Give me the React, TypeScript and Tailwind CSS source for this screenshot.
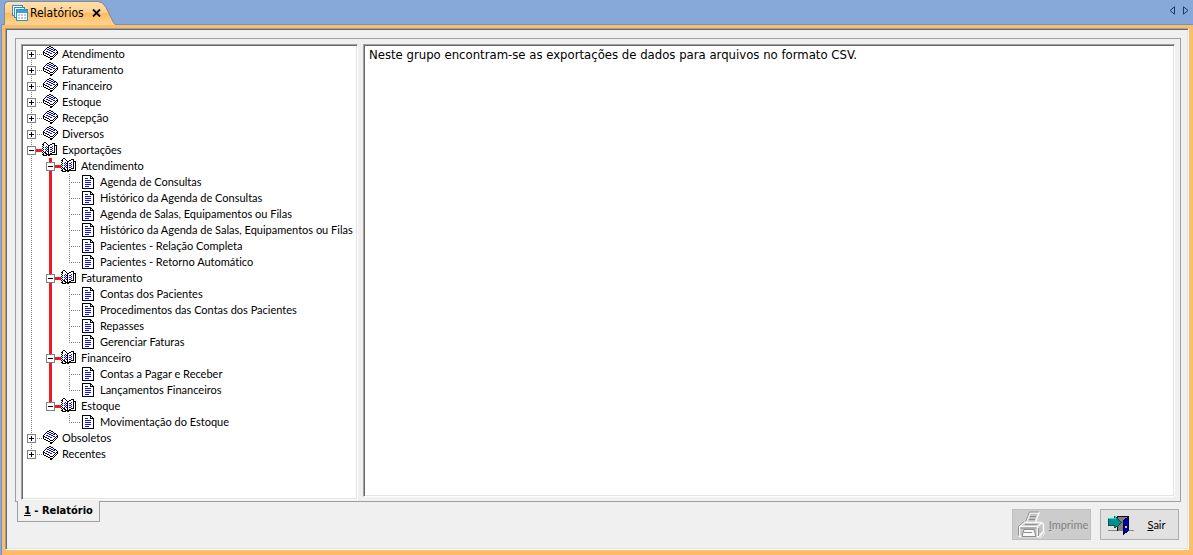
import { useState } from 'react';
import type { ReactNode } from 'react';

interface ReportNode {
  name: string;
  children?: ReportNode[];
}

const reports: ReportNode[] = [
  { name: 'Atendimento', children: [] },
  { name: 'Faturamento', children: [] },
  { name: 'Financeiro', children: [] },
  { name: 'Estoque', children: [] },
  { name: 'Recepção', children: [] },
  { name: 'Diversos', children: [] },
  {
    name: 'Exportações',
    children: [
      {
        name: 'Atendimento',
        children: [
          { name: 'Agenda de Consultas' },
          { name: 'Histórico da Agenda de Consultas' },
          { name: 'Agenda de Salas, Equipamentos ou Filas' },
          { name: 'Histórico da Agenda de Salas, Equipamentos ou Filas' },
          { name: 'Pacientes - Relação Completa' },
          { name: 'Pacientes - Retorno Automático' },
        ],
      },
      {
        name: 'Faturamento',
        children: [
          { name: 'Contas dos Pacientes' },
          { name: 'Procedimentos das Contas dos Pacientes' },
          { name: 'Repasses' },
          { name: 'Gerenciar Faturas' },
        ],
      },
      {
        name: 'Financeiro',
        children: [{ name: 'Contas a Pagar e Receber' }, { name: 'Lançamentos Financeiros' }],
      },
      { name: 'Estoque', children: [{ name: 'Movimentação do Estoque' }] },
    ],
  },
  { name: 'Obsoletos', children: [] },
  { name: 'Recentes', children: [] },
];

const closedBook = [
  '.......KK.......',
  '.....KKWWKK.....',
  '....KWWBBWWK....',
  '...KWBBWWBBWKK..',
  '..KWWWWBBWWBBWK.',
  '.KWWBBWWWBBWWWWK',
  '.KKWWWBBWWWBBWKK',
  '.KWKKWWWBBWWWKWK',
  '.KWWWKKWWWWWKWK.',
  '..KKWWWKWWWKWK..',
  '...WKKWWKKKWK...',
  '.....WKKWWWK....',
  '.......WKKK.....',
  '........KK......',
];

const openBook = [
  '..KK............',
  '.KWWK.....KKK...',
  'KKWWWK..KKWWK...',
  '.KWWWWKKWWWWKKK.',
  'KWWWBWKWWWBWKWK.',
  '.KWBWBKWBBWWKWK.',
  'KWWWBWKWWWBWKWK.',
  '.KWBWBKWBBWWKWK.',
  'KWWWBWKWWWBWKWK.',
  '.KWBWBKWBBWWKWK.',
  'KWKKWWKWWWKKKWK.',
  '.K.KKWKWKKWWWWK.',
  'KK..KKKKKKKKKKK.',
  '.KKKK.KK........',
];

const inks: Record<string, string> = { K: '#000000', W: '#ffffff', B: '#1010e8' };

function PixelIcon({ rows }: { rows: string[] }) {
  return (
    <svg width="16" height="16" viewBox="0 0 16 16" shapeRendering="crispEdges" aria-hidden="true">
      {rows.flatMap((row, y) =>
        row.split('').map((c, x) =>
          c === '.' ? null : <rect key={`${x}-${y}`} x={x} y={y} width="1" height="1" fill={inks[c]} />
        )
      )}
    </svg>
  );
}

function PageIcon() {
  return (
    <svg width="16" height="16" viewBox="0 0 16 16" shapeRendering="crispEdges" aria-hidden="true">
      <path d="M2.5 1.5h8l3 3v10h-11z" fill="#fff" stroke="#000" />
      <path d="M10.5 1.5v3h3" fill="none" stroke="#000" />
      <path d="M5 4.5h3M5 6.5h6M5 8.5h6M5 10.5h6M5 12.5h4" stroke="#1010e8" />
    </svg>
  );
}

type Line = 'none' | 'dotted' | 'red';

// One 19x16 slot of the tree: the vertical guide that runs through it
function Guide({ line }: { line: Line }) {
  return (
    <svg width="19" height="16" viewBox="0 0 19 16" shapeRendering="crispEdges" className="shrink-0" aria-hidden="true">
      {line === 'red' && <path d="M8.5 0v16" stroke="#ed1c24" strokeWidth="3" />}
      {line === 'dotted' && <path d="M8.5 0v16" stroke="#808080" strokeDasharray="1 1" />}
    </svg>
  );
}

interface JointProps {
  red: boolean;
  first: boolean;
  last: boolean;
  branch: Line;
  box?: 'plus' | 'minus';
}

function Joint({ red, first, last, branch, box }: JointProps) {
  const top = first ? 8 : 0;
  const bottom = last ? 9 : 16;
  return (
    <svg width="19" height="16" viewBox="0 0 19 16" shapeRendering="crispEdges" className="block" aria-hidden="true">
      {red ? (
        <path d={`M8.5 0V${bottom}`} stroke="#ed1c24" strokeWidth="3" />
      ) : (
        <path d={`M8.5 ${top}V${bottom}`} stroke="#808080" strokeDasharray="1 1" />
      )}
      {branch === 'red' ? (
        <path d="M9 8.5h10" stroke="#ed1c24" strokeWidth="3" />
      ) : (
        <path d="M10 8.5h9" stroke="#808080" strokeDasharray="1 1" />
      )}
      {box && (
        <>
          <rect x="4.5" y="4.5" width="8" height="8" fill="#fff" stroke="#808080" />
          <path d={box === 'plus' ? 'M6 8.5h5M8.5 6v5' : 'M6 8.5h5'} stroke="#000" />
        </>
      )}
    </svg>
  );
}

interface TreeProps {
  nodes: ReportNode[];
  guides: Line[];
  path: string;
  open: string[];
  onToggle: (path: string) => void;
}

function Tree({ nodes, guides, path, open, onToggle }: TreeProps) {
  const depth = guides.length;
  return (
    <ul>
      {nodes.map((node, i) => {
        const id = `${path}/${node.name}`;
        const isOpen = open.includes(id);
        const last = i === nodes.length - 1;
        const red = depth === 1;
        const joint = (
          <Joint
            red={red}
            first={depth === 0 && i === 0}
            last={last}
            branch={isOpen ? 'red' : 'dotted'}
            box={node.children ? (isOpen ? 'minus' : 'plus') : undefined}
          />
        );
        return (
          <li key={id}>
            <div className="flex h-4 items-center leading-4 whitespace-nowrap">
              {guides.map((line, g) => (
                <Guide key={g} line={line} />
              ))}
              {node.children ? (
                <button
                  aria-label={node.name}
                  aria-expanded={isOpen}
                  onClick={() => onToggle(id)}
                  className="shrink-0"
                >
                  {joint}
                </button>
              ) : (
                <span className="shrink-0">{joint}</span>
              )}
              <span className="w-5 shrink-0">
                {node.children ? <PixelIcon rows={isOpen ? openBook : closedBook} /> : <PageIcon />}
              </span>
              <span>{node.name}</span>
            </div>
            {isOpen && node.children && (
              <Tree
                nodes={node.children}
                guides={[...guides, last ? 'none' : red ? 'red' : 'dotted']}
                path={id}
                open={open}
                onToggle={onToggle}
              />
            )}
          </li>
        );
      })}
    </ul>
  );
}

function TablesIcon() {
  return (
    <svg width="16" height="16" viewBox="0 0 16 16" aria-hidden="true">
      <g fill="#fff" stroke="#2b8fc9" shapeRendering="crispEdges">
        <rect x="0.5" y="0.5" width="10" height="10" />
        <rect x="2.5" y="2.5" width="10" height="10" />
        <rect x="4.5" y="4.5" width="11" height="11" />
      </g>
      <path d="M5 5h10v3H5z" fill="#3f9fd4" />
      <path d="M6 9h2v2H6zM9 9h2v2H9zM12 9h2v2h-2zM6 12h2v2H6zM9 12h2v2H9zM12 12h2v2h-2z" fill="#bccbd6" />
    </svg>
  );
}

function PrinterIcon() {
  return (
    <svg width="28" height="28" viewBox="0 0 28 28" aria-hidden="true">
      <path d="M8 12l4-10h9l-4 10z" fill="#c4c4c4" stroke="#f8f8f8" strokeWidth="1.500" />
      <path d="M7.500 11l4-10h9" fill="none" stroke="#909090" />
      <path d="M12 5.500h6M11 8.500h6" stroke="#8c8c8c" />
      <path d="M1.500 15.500l5-4h17l2 2v7l-5 5h-19z" fill="#c4c4c4" stroke="#f8f8f8" strokeWidth="1.500" />
      <path d="M1.500 15.500h18l5-4M19.500 15.500v9" fill="none" stroke="#f8f8f8" strokeWidth="1.500" />
      <path d="M.5 24.500v-9l5.500-5M2.500 17h16M7 13.500h12M20.500 17v8" fill="none" stroke="#909090" />
      <path d="M6 18.500h10l2 7H4z" fill="#f8f8f8" stroke="#8c8c8c" />
      <path d="M6 21.500h8" stroke="#8c8c8c" />
      <path d="M20 26.500l7-7M22 27l5-5" stroke="#f8f8f8" strokeWidth="1.500" strokeDasharray="1 1" />
    </svg>
  );
}

function DoorIcon() {
  return (
    <svg width="32" height="26" viewBox="-2 0 32 26" shapeRendering="crispEdges" aria-hidden="true">
      <path d="M1 18.500h28" stroke="#808080" />
      <path d="M12 3h12v16H12z" fill="#808080" />
      <path d="M11.500 19V3.500H24" fill="none" stroke="#000" />
      <path d="M17.500 8.500l6-5v15l-6 5z" fill="#0000a0" stroke="#000050" />
      <path d="M19 14h2v2h-2z" fill="#d8d820" />
      <path d="M1.500 6.500h7v-3l7 7-7 6v-3h-7z" fill="#008c8c" stroke="#004848" />
      <path d="M1 6.500h8v-3" fill="none" stroke="#00e8e8" />
    </svg>
  );
}

interface ActionButtonProps {
  icon: ReactNode;
  label: string;
  disabled?: boolean;
  onClick?: () => void;
}

function ActionButton({ icon, label, disabled, onClick }: ActionButtonProps) {
  return (
    <button
      disabled={disabled}
      onClick={onClick}
      className="flex h-[31px] w-[79px] items-center border border-[#adadad] bg-[#e1e1e1] pl-1 font-['Lato',sans-serif] disabled:border-[#bfbfbf] disabled:bg-[#cccccc] disabled:text-[#838383]"
    >
      <span className="flex w-[30px] shrink-0 justify-center">{icon}</span>
      <span className="flex-1 pt-0.5 text-center">
        <u>{label[0]}</u>
        {label.slice(1)}
      </span>
    </button>
  );
}

export default function App() {
  const [open, setOpen] = useState<string[]>([
    '/Exportações',
    '/Exportações/Atendimento',
    '/Exportações/Faturamento',
    '/Exportações/Financeiro',
    '/Exportações/Estoque',
  ]);

  const toggle = (id: string) => {
    setOpen((prev) => (prev.includes(id) ? prev.filter((p) => p !== id) : [...prev, id]));
  };

  return (
    <div className="flex h-screen flex-col bg-[#86a9d9] font-['DejaVu_Sans_Condensed','DejaVu_Sans',sans-serif] text-[11px] text-black">
      {/* Tab bar */}
      <header className="flex h-6 shrink-0 items-end justify-between">
        <div className="relative ml-1 flex h-6 w-28 items-center">
          <svg className="absolute inset-0" width="112" height="25" viewBox="0 0 112 25" aria-hidden="true">
            <defs>
              <linearGradient id="tab" x1="0" y1="0" x2="0" y2="1">
                <stop offset="0" stopColor="#ffe0ae" />
                <stop offset="0.45" stopColor="#ffd08c" />
                <stop offset="0.5" stopColor="#ffbc60" />
                <stop offset="1" stopColor="#ffd592" />
              </linearGradient>
            </defs>
            <path d="M1 25V5q0-3 3-3H94q5 0 8 6l7 14q1 3 3 3z" fill="url(#tab)" />
            <path d="M.5 25V5q0-3.500 3.500-3.500H94q5 0 8 6l7 14q1 3 3 3" fill="none" stroke="#8a8a86" />
          </svg>
          <button className="relative flex items-center gap-0.5 pl-2 pt-0.5 text-xs">
            <TablesIcon />
            Relatórios
          </button>
          <button aria-label="Fechar" className="relative ml-2 pt-0.5">
            <svg width="9" height="8" viewBox="0 0 9 8" aria-hidden="true">
              <path d="M1 .5l7 7M8 .5l-7 7" stroke="#000" strokeWidth="1.800" />
            </svg>
          </button>
        </div>
        <div className="flex gap-2 self-start pt-1.5 pr-1">
          <button aria-label="Anterior">
            <svg width="6" height="9" viewBox="0 0 6 9" aria-hidden="true">
              <path d="M5.500 .8v7.400L1 4.500z" fill="none" stroke="#1c3a68" />
            </svg>
          </button>
          <button aria-label="Próximo">
            <svg width="6" height="9" viewBox="0 0 6 9" aria-hidden="true">
              <path d="M.5 .8v7.400L5 4.500z" fill="none" stroke="#1c3a68" />
            </svg>
          </button>
        </div>
      </header>

      {/* Orange frame */}
      <div className="ml-px flex min-h-0 flex-1 flex-col border-t border-l border-[#6f93c8] bg-[#ffbc68] pt-[3px] pr-[4px] pb-[5px] pl-[3px]">
        <main className="flex min-h-0 flex-1 flex-col border border-t-[#a0a0a0] border-r-white border-b-white border-l-[#a0a0a0] bg-[#f0f0f0] pt-[9px] pr-[7px] pb-[9px] pl-[9px] shadow-[inset_1px_1px_0_#696969,inset_-1px_-1px_0_#e3e3e3]">
          <div className="flex min-h-0 flex-1 gap-[5px] border border-[#a0a0a0] p-[5px] pb-[1px]">
            <nav
              aria-label="Relatórios"
              className="w-[337px] shrink-0 overflow-hidden border border-t-[#a0a0a0] border-r-white border-b-white border-l-[#a0a0a0] bg-white p-px font-['Lato',sans-serif] shadow-[inset_1px_1px_0_#696969,inset_-1px_-1px_0_#e3e3e3] [font-variant-ligatures:none]"
            >
              <Tree nodes={reports} guides={[]} path="" open={open} onToggle={toggle} />
            </nav>
            <section className="mb-[3px] min-w-0 flex-1 border border-t-[#a0a0a0] border-r-white border-b-white border-l-[#a0a0a0] bg-white px-[5px] py-px text-[13px] leading-[18px] shadow-[inset_1px_1px_0_#696969,inset_-1px_-1px_0_#e3e3e3]">
              Neste grupo encontram-se as exportações de dados para arquivos no formato CSV.
            </section>
          </div>
          <footer className="flex shrink-0 items-start justify-between pr-0.5">
            <button className="-mt-px ml-0.5 h-[21px] border border-t-0 border-[#a0a0a0] bg-[#f0f0f0] px-1.5 pt-px font-bold">
              <u>1</u> - Relatório
            </button>
            <div className="flex gap-[9px] pt-[7px]">
              <ActionButton icon={<PrinterIcon />} label="Imprime" disabled />
              <ActionButton icon={<DoorIcon />} label="Sair" />
            </div>
          </footer>
        </main>
      </div>
    </div>
  );
}
